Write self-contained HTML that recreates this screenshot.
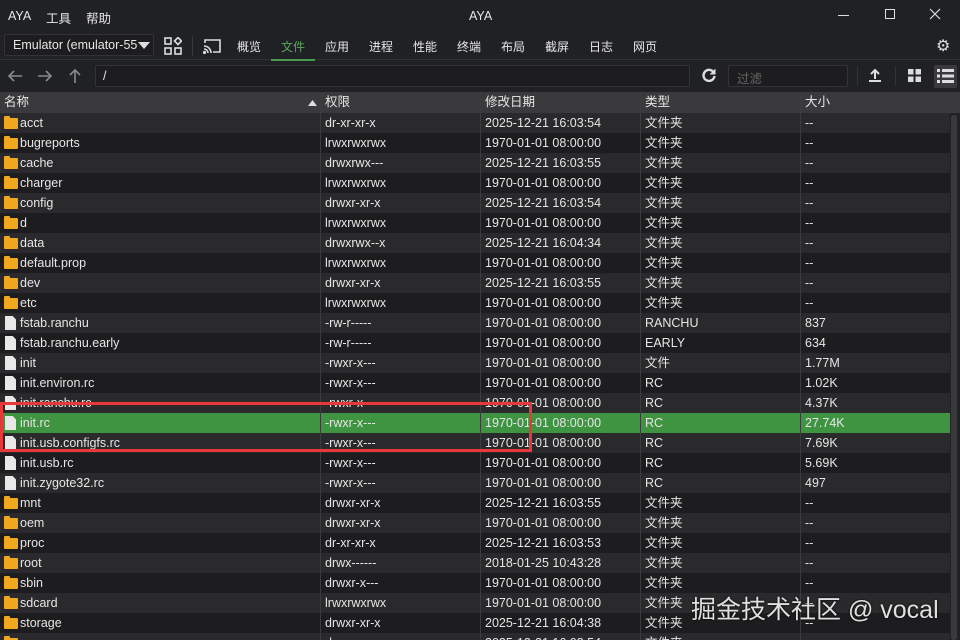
<!DOCTYPE html>
<html><head><meta charset="utf-8"><style>
*{margin:0;padding:0;box-sizing:border-box}
html,body{width:960px;height:640px;overflow:hidden}
body{background:#202124;font-family:"Liberation Sans","Noto Sans CJK SC",sans-serif;color:#e6e6e6;font-size:12.5px;position:relative}
.abs{position:absolute}
.title{top:0;left:0;width:960px;height:32px;background:#202124}
.tb{top:32px;left:0;width:960px;height:28px;background:#202124;border-bottom:1px solid #333}
.tab{position:absolute;top:38px;font-size:12px;color:#e6e6e6}
.nav{top:61px;left:0;width:960px;height:31px;background:#202124}
.hdr{top:92px;left:0;width:960px;height:21px;background:#3a3a3c}
.hdr div{position:absolute;top:0;line-height:21px;font-size:12.5px}
.row{position:absolute;left:0;width:950px;height:20px}
.row span{position:absolute;top:0;line-height:20px;white-space:nowrap}
.c1{left:20px}.c2{left:325px}.c3{left:485px}.c4{left:645px}.c5{left:805px}
.a{background:#2a2a2c}.b{background:#1d1d1f}
.sel{background:#3f9442}
.vl{position:absolute;top:92px;width:1px;height:548px;background:#3c3c3e}
.fold{position:absolute;left:4px;top:5px;width:14px;height:11px;background:#f2a81e;border-radius:1px}
.fold:before{content:"";position:absolute;left:0;top:-2px;width:6px;height:3px;background:#f2a81e;border-radius:1px 1px 0 0}
.file{position:absolute;left:5px;top:3px;width:11px;height:14px;background:#e8e8e8;clip-path:polygon(0 0,70% 0,100% 25%,100% 100%,0 100%)}
</style></head><body>
<div class="abs title"></div>
<div class="abs" style="left:8px;top:9px">AYA</div>
<div class="abs" style="left:46px;top:8px">工具</div>
<div class="abs" style="left:86px;top:8px">帮助</div>
<div class="abs" style="left:469px;top:9px">AYA</div>
<div class="abs" style="left:838px;top:15px;width:11px;height:1px;background:#ddd"></div>
<div class="abs" style="left:885px;top:9px;width:10px;height:10px;border:1px solid #ddd"></div>
<svg class="abs" style="left:929px;top:8px" width="12" height="12"><path d="M1 1L11 11M11 1L1 11" stroke="#ddd" stroke-width="1.2"/></svg>
<div class="abs tb"></div>
<div class="abs" style="left:4px;top:34px;width:150px;height:22px;border:1px solid #333;background:#1d1d1f;border-radius:2px"></div>
<div class="abs" style="left:13px;top:38px;width:124px;overflow:hidden;white-space:nowrap">Emulator (emulator-5554)</div>
<svg class="abs" style="left:138px;top:42px" width="12" height="8"><path d="M0 0H12L6 7Z" fill="#ddd"/></svg>
<svg class="abs" style="left:164px;top:37px" width="18" height="18" fill="none" stroke="#ddd" stroke-width="1.6"><rect x="1" y="1" width="6" height="6"/><rect x="1" y="11" width="6" height="6"/><rect x="11" y="11" width="6" height="6"/><path d="M14 0.5L17.5 4L14 7.5L10.5 4Z"/></svg>
<div class="abs" style="left:192px;top:36px;width:1px;height:20px;background:#3a3a3a"></div>
<svg class="abs" style="left:203px;top:38px" width="18" height="16" fill="none" stroke="#ddd" stroke-width="1.6"><path d="M2 5V2H17V14H10"/><path d="M1 8A7 7 0 0 1 8 15M1 11A4 4 0 0 1 5 15"/><circle cx="1.5" cy="14.5" r="0.8" fill="#ddd"/></svg>
<div class="tab" style="left:237px">概览</div>
<div class="tab" style="left:281px;color:#5ba85e">文件</div>
<div class="abs" style="left:271px;top:59px;width:44px;height:2px;background:#4c9a50"></div>
<div class="tab" style="left:325px">应用</div>
<div class="tab" style="left:369px">进程</div>
<div class="tab" style="left:413px">性能</div>
<div class="tab" style="left:457px">终端</div>
<div class="tab" style="left:501px">布局</div>
<div class="tab" style="left:545px">截屏</div>
<div class="tab" style="left:589px">日志</div>
<div class="tab" style="left:633px">网页</div>
<div class="abs" style="left:936px;top:36px;font-size:16px;color:#ddd">⚙</div>
<div class="abs nav"></div>
<svg class="abs" style="left:7px;top:69px" width="16" height="14" fill="none" stroke="#8a8a8a" stroke-width="1.6"><path d="M15 7H2M7 2L2 7L7 12"/></svg>
<svg class="abs" style="left:37px;top:69px" width="16" height="14" fill="none" stroke="#8a8a8a" stroke-width="1.6"><path d="M1 7H14M9 2L14 7L9 12"/></svg>
<svg class="abs" style="left:68px;top:68px" width="14" height="16" fill="none" stroke="#8a8a8a" stroke-width="1.6"><path d="M7 15V2M2 7L7 2L12 7"/></svg>
<div class="abs" style="left:95px;top:65px;width:595px;height:22px;border:1px solid #333;background:#1d1d1f;border-radius:2px"></div>
<div class="abs" style="left:103px;top:69px">/</div>
<svg class="abs" style="left:702px;top:68px" width="14" height="14" fill="none" stroke="#ddd" stroke-width="2.4"><path d="M12 5A5.5 5.5 0 1 0 12.5 8"/><path d="M13 1V6H8" fill="#ddd" stroke-width="1"/></svg>
<div class="abs" style="left:728px;top:65px;width:120px;height:22px;border:1px solid #333;background:#1d1d1f;border-radius:2px"></div>
<div class="abs" style="left:737px;top:68px;color:#666">过滤</div>
<div class="abs" style="left:857px;top:66px;width:1px;height:20px;background:#333"></div>
<svg class="abs" style="left:868px;top:68px" width="14" height="14" fill="none" stroke="#ddd" stroke-width="2"><path d="M7 11V2M3 6L7 2L11 6M1 13H13"/></svg>
<div class="abs" style="left:895px;top:66px;width:1px;height:20px;background:#333"></div>
<svg class="abs" style="left:908px;top:69px" width="13" height="13" fill="#ddd"><rect x="0" y="0" width="5.5" height="5.5"/><rect x="7.5" y="0" width="5.5" height="5.5"/><rect x="0" y="7.5" width="5.5" height="5.5"/><rect x="7.5" y="7.5" width="5.5" height="5.5"/></svg>
<div class="abs" style="left:934px;top:65px;width:23px;height:23px;background:#3a3a3c;border-radius:2px"></div>
<svg class="abs" style="left:937px;top:69px" width="17" height="14" fill="#ddd"><rect x="0" y="0" width="3" height="3"/><rect x="5" y="0" width="12" height="3"/><rect x="0" y="5.5" width="3" height="3"/><rect x="5" y="5.5" width="12" height="3"/><rect x="0" y="11" width="3" height="3"/><rect x="5" y="11" width="12" height="3"/></svg>
<div class="abs hdr"><div style="left:4px">名称</div><div style="left:325px">权限</div><div style="left:485px">修改日期</div><div style="left:645px">类型</div><div style="left:805px">大小</div></div>
<svg class="abs" style="left:308px;top:100px" width="9" height="6"><path d="M0 6L4.5 0L9 6Z" fill="#ddd"/></svg>

<div class="row a" style="top:113px"><i class="fold"></i><span class="c1">acct</span><span class="c2">dr-xr-xr-x</span><span class="c3">2025-12-21 16:03:54</span><span class="c4">文件夹</span><span class="c5">--</span></div>
<div class="row b" style="top:133px"><i class="fold"></i><span class="c1">bugreports</span><span class="c2">lrwxrwxrwx</span><span class="c3">1970-01-01 08:00:00</span><span class="c4">文件夹</span><span class="c5">--</span></div>
<div class="row a" style="top:153px"><i class="fold"></i><span class="c1">cache</span><span class="c2">drwxrwx---</span><span class="c3">2025-12-21 16:03:55</span><span class="c4">文件夹</span><span class="c5">--</span></div>
<div class="row b" style="top:173px"><i class="fold"></i><span class="c1">charger</span><span class="c2">lrwxrwxrwx</span><span class="c3">1970-01-01 08:00:00</span><span class="c4">文件夹</span><span class="c5">--</span></div>
<div class="row a" style="top:193px"><i class="fold"></i><span class="c1">config</span><span class="c2">drwxr-xr-x</span><span class="c3">2025-12-21 16:03:54</span><span class="c4">文件夹</span><span class="c5">--</span></div>
<div class="row b" style="top:213px"><i class="fold"></i><span class="c1">d</span><span class="c2">lrwxrwxrwx</span><span class="c3">1970-01-01 08:00:00</span><span class="c4">文件夹</span><span class="c5">--</span></div>
<div class="row a" style="top:233px"><i class="fold"></i><span class="c1">data</span><span class="c2">drwxrwx--x</span><span class="c3">2025-12-21 16:04:34</span><span class="c4">文件夹</span><span class="c5">--</span></div>
<div class="row b" style="top:253px"><i class="fold"></i><span class="c1">default.prop</span><span class="c2">lrwxrwxrwx</span><span class="c3">1970-01-01 08:00:00</span><span class="c4">文件夹</span><span class="c5">--</span></div>
<div class="row a" style="top:273px"><i class="fold"></i><span class="c1">dev</span><span class="c2">drwxr-xr-x</span><span class="c3">2025-12-21 16:03:55</span><span class="c4">文件夹</span><span class="c5">--</span></div>
<div class="row b" style="top:293px"><i class="fold"></i><span class="c1">etc</span><span class="c2">lrwxrwxrwx</span><span class="c3">1970-01-01 08:00:00</span><span class="c4">文件夹</span><span class="c5">--</span></div>
<div class="row a" style="top:313px"><i class="file"></i><span class="c1">fstab.ranchu</span><span class="c2">-rw-r-----</span><span class="c3">1970-01-01 08:00:00</span><span class="c4">RANCHU</span><span class="c5">837</span></div>
<div class="row b" style="top:333px"><i class="file"></i><span class="c1">fstab.ranchu.early</span><span class="c2">-rw-r-----</span><span class="c3">1970-01-01 08:00:00</span><span class="c4">EARLY</span><span class="c5">634</span></div>
<div class="row a" style="top:353px"><i class="file"></i><span class="c1">init</span><span class="c2">-rwxr-x---</span><span class="c3">1970-01-01 08:00:00</span><span class="c4">文件</span><span class="c5">1.77M</span></div>
<div class="row b" style="top:373px"><i class="file"></i><span class="c1">init.environ.rc</span><span class="c2">-rwxr-x---</span><span class="c3">1970-01-01 08:00:00</span><span class="c4">RC</span><span class="c5">1.02K</span></div>
<div class="row a" style="top:393px"><i class="file"></i><span class="c1">init.ranchu.rc</span><span class="c2">-rwxr-x---</span><span class="c3">1970-01-01 08:00:00</span><span class="c4">RC</span><span class="c5">4.37K</span></div>
<div class="row sel" style="top:413px"><i class="file"></i><span class="c1">init.rc</span><span class="c2">-rwxr-x---</span><span class="c3">1970-01-01 08:00:00</span><span class="c4">RC</span><span class="c5">27.74K</span></div>
<div class="row a" style="top:433px"><i class="file"></i><span class="c1">init.usb.configfs.rc</span><span class="c2">-rwxr-x---</span><span class="c3">1970-01-01 08:00:00</span><span class="c4">RC</span><span class="c5">7.69K</span></div>
<div class="row b" style="top:453px"><i class="file"></i><span class="c1">init.usb.rc</span><span class="c2">-rwxr-x---</span><span class="c3">1970-01-01 08:00:00</span><span class="c4">RC</span><span class="c5">5.69K</span></div>
<div class="row a" style="top:473px"><i class="file"></i><span class="c1">init.zygote32.rc</span><span class="c2">-rwxr-x---</span><span class="c3">1970-01-01 08:00:00</span><span class="c4">RC</span><span class="c5">497</span></div>
<div class="row b" style="top:493px"><i class="fold"></i><span class="c1">mnt</span><span class="c2">drwxr-xr-x</span><span class="c3">2025-12-21 16:03:55</span><span class="c4">文件夹</span><span class="c5">--</span></div>
<div class="row a" style="top:513px"><i class="fold"></i><span class="c1">oem</span><span class="c2">drwxr-xr-x</span><span class="c3">1970-01-01 08:00:00</span><span class="c4">文件夹</span><span class="c5">--</span></div>
<div class="row b" style="top:533px"><i class="fold"></i><span class="c1">proc</span><span class="c2">dr-xr-xr-x</span><span class="c3">2025-12-21 16:03:53</span><span class="c4">文件夹</span><span class="c5">--</span></div>
<div class="row a" style="top:553px"><i class="fold"></i><span class="c1">root</span><span class="c2">drwx------</span><span class="c3">2018-01-25 10:43:28</span><span class="c4">文件夹</span><span class="c5">--</span></div>
<div class="row b" style="top:573px"><i class="fold"></i><span class="c1">sbin</span><span class="c2">drwxr-x---</span><span class="c3">1970-01-01 08:00:00</span><span class="c4">文件夹</span><span class="c5">--</span></div>
<div class="row a" style="top:593px"><i class="fold"></i><span class="c1">sdcard</span><span class="c2">lrwxrwxrwx</span><span class="c3">1970-01-01 08:00:00</span><span class="c4">文件夹</span><span class="c5">--</span></div>
<div class="row b" style="top:613px"><i class="fold"></i><span class="c1">storage</span><span class="c2">drwxr-xr-x</span><span class="c3">2025-12-21 16:04:38</span><span class="c4">文件夹</span><span class="c5">--</span></div>
<div class="row a" style="top:633px"><i class="fold"></i><span class="c1">sys</span><span class="c2">dr-xr-xr-x</span><span class="c3">2025-12-21 16:03:54</span><span class="c4">文件夹</span><span class="c5">--</span></div>

<div class="vl" style="left:320px"></div><div class="vl" style="left:480px"></div><div class="vl" style="left:640px"></div><div class="vl" style="left:800px"></div>
<div class="abs" style="left:951px;top:115px;width:6px;height:525px;background:#3a3a3c;border-radius:3px"></div>
<div class="abs" style="left:0;top:402px;width:532px;height:50px;border:3px solid #e8383c"></div>
<div class="abs" style="left:691px;top:590px;font-size:25px;color:#e0e0e0;text-shadow:0 0 2px #000">掘金技术社区 @ vocal</div>
</body></html>
